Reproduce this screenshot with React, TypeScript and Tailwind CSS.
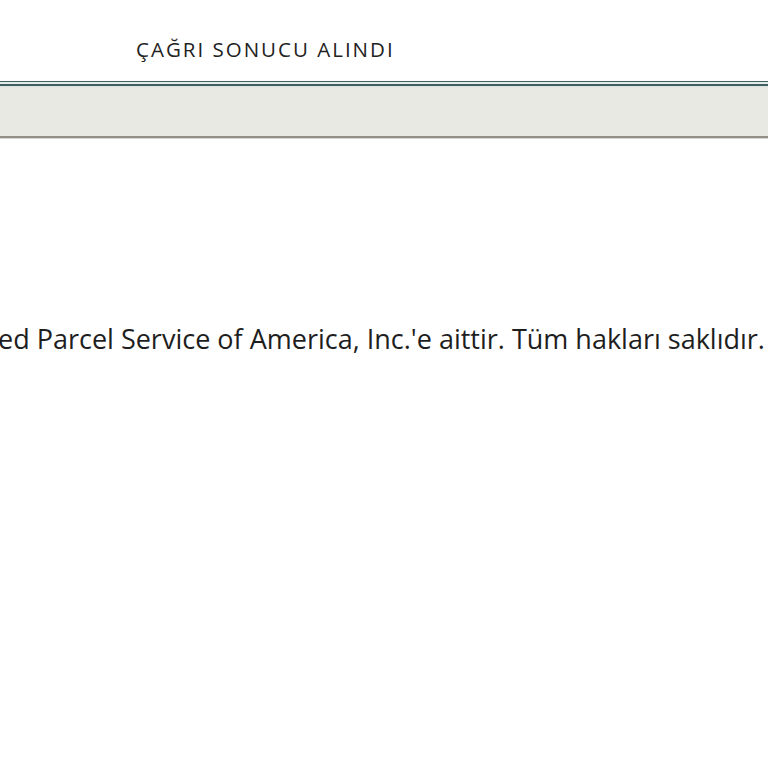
export default function App() {
  return (
    <div className="min-h-[768px] w-[768px] overflow-hidden bg-white font-['Open_Sans','Noto_Sans',sans-serif] text-[#1e1e1e]">
      {/* HEADER */}
      <div className="flex h-[81px] items-start pl-[136px] pt-[36px]">
        <h1 className="text-[20.5px] leading-[26px] tracking-[2px] text-[#222]">ÇAĞRI SONUCU ALINDI</h1>
      </div>

      {/* DOUBLE RULE */}
      <div className="h-[1px] bg-[#3f5f60]" />
      <div className="h-[2px] bg-[#e2ebea]" />
      <div className="h-[2px] bg-[#3f5f60]" />
      <div className="h-[1px] bg-[#d7e4e2]" />

      {/* GREY BAND */}
      <div className="h-[49px] bg-[#e9e9e4]" />
      <div className="h-[2px] bg-[#948f86]" />
      <div className="h-[1px] bg-[#d9d7d2]" />

      {/* FOOTER */}
      <div className="mt-[181px] overflow-hidden">
        <p className="ml-[-2px] whitespace-nowrap text-[27px] leading-[38px] text-[#1e1e1e]">
          ed Parcel Service of America, Inc.'e aittir. Tüm hakları saklıdır.
        </p>
      </div>
    </div>
  );
}
